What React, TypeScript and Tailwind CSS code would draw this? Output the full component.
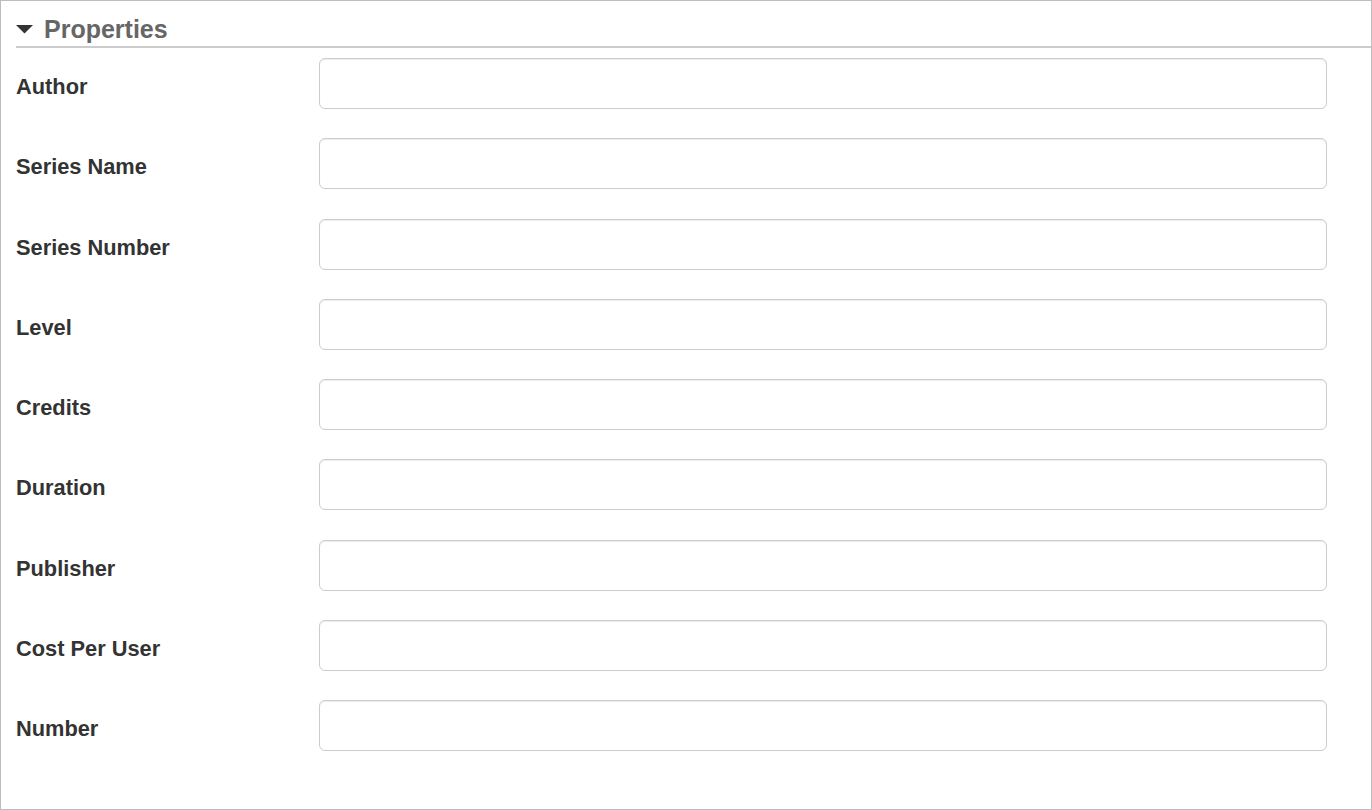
import React from "react";

const fields = [
  "Author",
  "Series Name",
  "Series Number",
  "Level",
  "Credits",
  "Duration",
  "Publisher",
  "Cost Per User",
  "Number",
];

export default function App() {
  return (
    <div
      className="w-[1372px] h-[810px] border border-[#bdbdbd] bg-white pl-[15px] box-border overflow-hidden"
      style={{ fontFamily: '"Liberation Sans", Arial, sans-serif' }}
    >
      <div className="flex items-center h-[47px] pt-[11px] border-b-2 border-[#cccccc]">
        <svg width="17" height="9" viewBox="0 0 17 9" className="ml-[0px] mr-[11px]">
          <polygon points="0,0 17,0 8.5,8.5" fill="#333333" />
        </svg>
        <span className="text-[25px] font-bold text-[#666666] leading-none">Properties</span>
      </div>
      <div className="pt-[10px] pr-[44px]">
        {fields.map((f) => (
          <div key={f} className="flex items-center h-[51px] mb-[29.25px]">
            <label className="w-[303px] shrink-0 text-[21.8px] font-bold text-[#333333] pt-[8px]">{f}</label>
            <input
              type="text"
              className="flex-1 h-[51px] border border-[#cccccc] rounded-[6px] bg-white shadow-[inset_0_1px_1px_rgba(0,0,0,0.075)] outline-none"
            />
          </div>
        ))}
      </div>
    </div>
  );
}
